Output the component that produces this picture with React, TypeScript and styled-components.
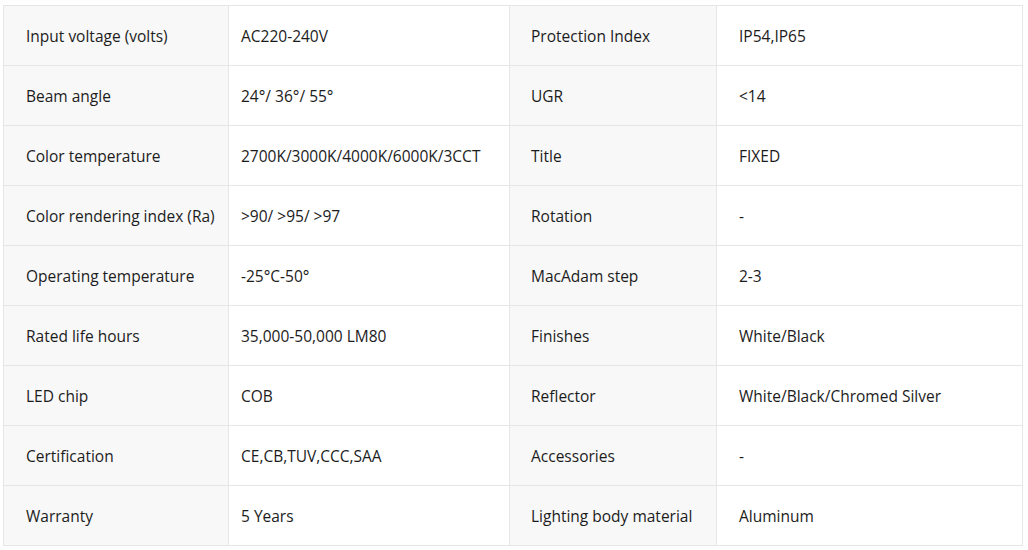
import React from "react";
import styled, { createGlobalStyle } from "styled-components";

const GlobalStyle = createGlobalStyle`
  html, body {
    margin: 0;
    padding: 0;
    background: #ffffff;
  }
`;

const specs: [string, string, string, string][] = [
  ["Input voltage (volts)", "AC220-240V", "Protection Index", "IP54,IP65"],
  ["Beam angle", "24°/ 36°/ 55°", "UGR", "<14"],
  ["Color temperature", "2700K/3000K/4000K/6000K/3CCT", "Title", "FIXED"],
  ["Color rendering index (Ra)", ">90/ >95/ >97", "Rotation", "-"],
  ["Operating temperature", "-25°C-50°", "MacAdam step", "2-3"],
  ["Rated life hours", "35,000-50,000 LM80", "Finishes", "White/Black"],
  ["LED chip", "COB", "Reflector", "White/Black/Chromed Silver"],
  ["Certification", "CE,CB,TUV,CCC,SAA", "Accessories", "-"],
  ["Warranty", "5 Years", "Lighting body material", "Aluminum"],
];

const Page = styled.div`
  padding: 5px 5px 0 3px;
`;

const Table = styled.div`
  display: grid;
  grid-template-columns: 225px 281px 207px 306px;
  grid-auto-rows: 60px;
  border-top: 1px solid #e6e6e6;
  border-left: 1px solid #e6e6e6;
  width: 1019px;
  font-family: "Open Sans", "Noto Sans", sans-serif;
  font-size: 15.5px;
  color: #1c1c1c;
`;

const Cell = styled.div<{ $label?: boolean; $pad: number }>`
  display: flex;
  align-items: center;
  padding-left: ${(p) => p.$pad}px;
  background: ${(p) => (p.$label ? "#f8f8f8" : "#ffffff")};
  border-right: 1px solid #e6e6e6;
  border-bottom: 1px solid #e6e6e6;
  white-space: nowrap;
  overflow: hidden;
`;

export default function App() {
  return (
    <Page>
      <GlobalStyle />
      <Table>
        {specs.map((row) => (
          <React.Fragment key={row[0]}>
            <Cell $label $pad={22}>{row[0]}</Cell>
            <Cell $pad={12}>{row[1]}</Cell>
            <Cell $label $pad={21}>{row[2]}</Cell>
            <Cell $pad={22}>{row[3]}</Cell>
          </React.Fragment>
        ))}
      </Table>
    </Page>
  );
}
